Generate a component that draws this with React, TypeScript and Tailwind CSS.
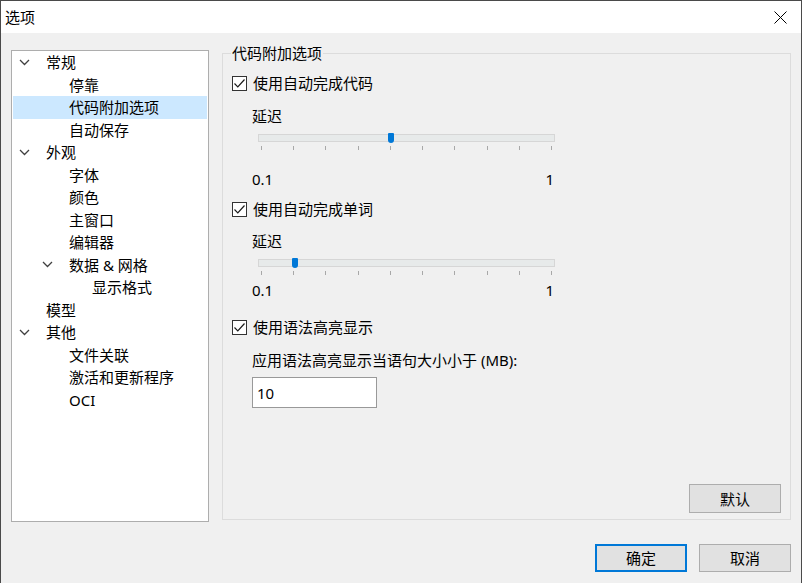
import { ReactNode } from "react";

type TreeItem = { label: string; pad: string; open?: boolean; selected?: boolean };

const treeItems: TreeItem[] = [
  { label: "常规", pad: "pl-[6px]", open: true },
  { label: "停靠", pad: "pl-[29px]" },
  { label: "代码附加选项", pad: "pl-[29px]", selected: true },
  { label: "自动保存", pad: "pl-[29px]" },
  { label: "外观", pad: "pl-[6px]", open: true },
  { label: "字体", pad: "pl-[29px]" },
  { label: "颜色", pad: "pl-[29px]" },
  { label: "主窗口", pad: "pl-[29px]" },
  { label: "编辑器", pad: "pl-[29px]" },
  { label: "数据 & 网格", pad: "pl-[29px]", open: true },
  { label: "显示格式", pad: "pl-[52px]" },
  { label: "模型", pad: "pl-[6px]" },
  { label: "其他", pad: "pl-[6px]", open: true },
  { label: "文件关联", pad: "pl-[29px]" },
  { label: "激活和更新程序", pad: "pl-[29px]" },
  { label: "OCI", pad: "pl-[29px]" },
];

const Chevron = () => (
  <svg width="11" height="7" viewBox="0 0 11 7" fill="none">
    <path d="M1 1 L5.5 5.5 L10 1" stroke="#404040" strokeWidth="1.3" />
  </svg>
);

const Checkbox = ({ children }: { children: ReactNode }) => (
  <div className="flex h-[20px] items-center gap-[6px]">
    <div className="flex h-[15px] w-[15px] items-center justify-center border border-[#333333] bg-white">
      <svg width="13" height="13" viewBox="0 0 13 13" fill="none">
        <path d="M1.5 6.5 L4.8 9.8 L11.5 2.5" stroke="#1a1a1a" strokeWidth="1.2" />
      </svg>
    </div>
    <span>{children}</span>
  </div>
);

const ticks = [0, 1, 2, 3, 4, 5, 6, 7, 8, 9];

const Slider = ({ thumb }: { thumb: string }) => (
  <div className="ml-[6px] w-[297px]">
    <div className="relative h-[8px] border border-[#d6d6d6] bg-[#e7eaea]">
      <div className={`absolute -top-[2px] h-[10px] w-[6px] rounded-t-[1px] rounded-b-[3px] bg-[#0078d7] ${thumb}`} />
    </div>
    <div className="mt-[4px] flex h-[4px] justify-between px-[3px]">
      {ticks.map((t) => (
        <div key={t} className="h-[4px] w-px bg-[#a8a8a8]" />
      ))}
    </div>
  </div>
);

const Range = ({ mt }: { mt: string }) => (
  <div className={`flex h-[20px] w-[302px] items-center justify-between ${mt}`}>
    <span>0.1</span>
    <span>1</span>
  </div>
);

export default function App() {
  return (
    <div className="flex h-[583px] w-[802px] flex-col overflow-hidden border-x border-t border-[#4a4a4a] bg-[#f0f0f0] text-[15px] leading-[20px] text-black [font-family:'Noto_Sans','Noto_Sans_CJK_SC',sans-serif]">
      {/* Title bar */}
      <div className="flex h-[32px] shrink-0 items-center justify-between bg-white pl-[4px] pr-[14px]">
        <span>选项</span>
        <svg width="13" height="13" viewBox="0 0 13 13" fill="none">
          <path d="M0.5 0.5 L12.5 12.5 M12.5 0.5 L0.5 12.5" stroke="#000" strokeWidth="1" />
        </svg>
      </div>

      <div className="flex flex-col px-[10px] pt-[17px]">
        <div className="flex items-start gap-[13px]">
          {/* Tree */}
          <div className="h-[472px] w-[198px] shrink-0 border border-[#adadad] bg-white px-[1px]">
            {treeItems.map((item) => (
              <div
                key={item.label}
                className={`flex h-[22.5px] items-center ${item.pad} ${item.selected ? "bg-[#cce8ff]" : ""}`}
              >
                <div className="flex w-[27px] shrink-0 items-center">{item.open && <Chevron />}</div>
                <span className="whitespace-nowrap">{item.label}</span>
              </div>
            ))}
          </div>

          {/* Group box */}
          <div className="relative mt-[3px] flex h-[467px] w-[569px] flex-col border border-[#dcdcdc] pl-[9px] pr-[9px] pt-[19px] pb-[6px]">
            <span className="absolute -top-[11px] left-[8px] bg-[#f0f0f0] px-px">代码附加选项</span>

            <Checkbox>使用自动完成代码</Checkbox>
            <div className="pl-[20px]">
              <div className="mt-[13px] flex h-[20px] items-center">延迟</div>
              <div className="mt-[8px]">
                <Slider thumb="left-[129px]" />
              </div>
              <Range mt="mt-[19px]" />
            </div>

            <div className="mt-[10px]">
              <Checkbox>使用自动完成单词</Checkbox>
            </div>
            <div className="pl-[20px]">
              <div className="mt-[12px] flex h-[20px] items-center">延迟</div>
              <div className="mt-[8px]">
                <Slider thumb="left-[33px]" />
              </div>
              <Range mt="mt-[5px]" />
            </div>

            <div className="mt-[17px]">
              <Checkbox>使用语法高亮显示</Checkbox>
            </div>
            <div className="pl-[20px]">
              <div className="mt-[13px] flex h-[20px] items-center">应用语法高亮显示当语句大小小于 (MB):</div>
              <div className="mt-[7px] flex h-[31px] w-[125px] items-center border border-[#999999] bg-white pl-[4px]">
                10
              </div>
            </div>

            <div className="mt-auto flex justify-end">
              <button className="flex h-[29px] w-[92px] items-center justify-center border border-[#adadad] bg-[#e1e1e1]">
                默认
              </button>
            </div>
          </div>
        </div>

        {/* Dialog buttons */}
        <div className="mt-[22px] flex justify-end gap-[12px]">
          <button className="flex h-[28px] w-[92px] items-center justify-center border-2 border-[#0078d7] bg-[#e1e1e1]">
            确定
          </button>
          <button className="flex h-[28px] w-[92px] items-center justify-center border border-[#adadad] bg-[#e1e1e1]">
            取消
          </button>
        </div>
      </div>
    </div>
  );
}
